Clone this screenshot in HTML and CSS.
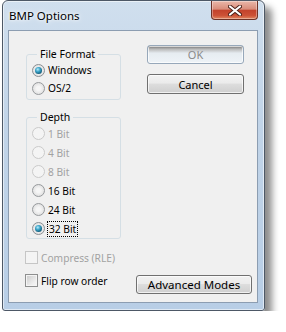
FILE: index.html
```html
<!DOCTYPE html>
<html lang="en">
<head>
  <meta charset="UTF-8" />
  <title>BMP Options</title>
  <link rel="stylesheet" href="styles.css">
</head>
<body>

  <!-- Dialog window -->
  <div class="window">
    <div class="titlebar">
      <span class="title">BMP Options</span>
      <button class="close" aria-label="Close">
        <svg width="14" height="11" viewBox="0 0 14 11">
          <path d="M2 1.5 L12 9.5 M12 1.5 L2 9.5" stroke="#4a2018" stroke-width="4" stroke-linecap="round"/>
          <path d="M2 1.5 L12 9.5 M12 1.5 L2 9.5" stroke="#fff" stroke-width="2.2" stroke-linecap="round"/>
        </svg>
      </button>
    </div>

    <div class="client">
      <div class="top">
        <div class="groups">
          <fieldset class="group format">
            <legend>File Format</legend>
            <label class="option"><span class="radio checked"></span>Windows</label>
            <label class="option"><span class="radio"></span>OS/2</label>
          </fieldset>

          <fieldset class="group depth">
            <legend>Depth</legend>
            <label class="option disabled"><span class="radio"></span>1 Bit</label>
            <label class="option disabled"><span class="radio"></span>4 Bit</label>
            <label class="option disabled"><span class="radio"></span>8 Bit</label>
            <label class="option"><span class="radio"></span>16 Bit</label>
            <label class="option"><span class="radio"></span>24 Bit</label>
            <label class="option"><span class="radio checked"></span><span class="focus">32 Bit</span></label>
          </fieldset>
        </div>

        <div class="actions">
          <button class="btn btn-default">OK</button>
          <button class="btn">Cancel</button>
        </div>
      </div>

      <div class="bottom">
        <div class="checks">
          <label class="option disabled"><span class="checkbox"></span>Compress (RLE)</label>
          <label class="option"><span class="checkbox"></span>Flip row order</label>
        </div>
        <button class="btn btn-wide">Advanced Modes</button>
      </div>
    </div>
  </div>

</body>
</html>
```

FILE: styles.css
```css
* {
  margin: 0;
  padding: 0;
  box-sizing: border-box;
  font-family: "Noto Sans", sans-serif;
}

body {
  background-color: #ffffff;
  padding-left: 2px;
}

/* window frame */
.window {
  width: 263px;
  display: flex;
  flex-direction: column;
  border: 1px solid #4d5866;
  border-radius: 6px 6px 3px 3px;
  background: linear-gradient(to bottom, #d0dfee 0, #c1d4e8 40%, #b8cee6 100%);
  box-shadow: inset 0 0 0 1px rgba(255, 255, 255, 0.55), 7px 7px 7px rgba(0, 0, 0, 0.45);
}

.titlebar {
  height: 29px;
  display: flex;
  align-items: center;
  padding-left: 6px;
}

.title {
  font-size: 11.5px;
  color: #000;
  text-shadow: 0 0 6px #fff, 0 0 3px #fff;
}

.close {
  align-self: flex-start;
  margin-left: auto;
  margin-right: 6px;
  width: 47px;
  height: 19px;
  border: 1px solid #6d3227;
  border-top: none;
  border-radius: 0 0 4px 4px;
  background: linear-gradient(to bottom, #eab7a9 0, #d98d7b 45%, #c3432c 52%, #cc5136 80%, #e08660 100%);
  box-shadow: inset 0 0 0 1px rgba(255, 255, 255, 0.35);
  display: flex;
  align-items: center;
  justify-content: center;
}

/* client area */
.client {
  margin: 0 6px 7px 5px;
  background-color: #f0f0f0;
  border: 1px solid #8c9db1;
  padding: 16px 0 8px 0;
  display: flex;
  flex-direction: column;
}

.top {
  display: flex;
  align-items: flex-start;
}

.groups {
  margin-left: 17px;
  display: flex;
  flex-direction: column;
  gap: 10px;
}

.group {
  width: 95px;
  border: 1px solid #d5dfe5;
  border-radius: 3px;
  padding: 0 4px 0 5px;
}

.group legend {
  font-size: 10.5px;
  line-height: 14px;
  margin-left: 5px;
  padding: 0 3px;
  color: #000;
}

.format {
  padding-bottom: 2px;
}

.option {
  display: flex;
  align-items: center;
  gap: 3px;
  height: 19px;
  font-size: 10.2px;
  color: #000;
}

.format .option {
  height: 18px;
}

.option.disabled {
  color: #a2a2a2;
}

.radio {
  flex: none;
  width: 13px;
  height: 13px;
  border-radius: 50%;
  border: 1px solid #979a9d;
  background: radial-gradient(circle at 50% 50%, #f6f6f6 25%, #d6d6d6 100%);
  display: flex;
  align-items: center;
  justify-content: center;
}

.radio.checked {
  border-color: #8b8f93;
}

.radio.checked::after {
  content: "";
  width: 7px;
  height: 7px;
  border-radius: 50%;
  background: radial-gradient(circle at 40% 35%, #b9ecfb 0, #3ea6ca 35%, #0f5a78 75%, #083c52 100%);
}

.disabled .radio {
  border-color: #cacaca;
  background: #f4f4f4;
}

.focus {
  outline: 1px dotted #000;
  padding: 0 1px;
  line-height: 14px;
}

/* buttons */
.actions {
  margin-left: 26px;
  margin-top: -2px;
  display: flex;
  flex-direction: column;
  gap: 10px;
}

.btn {
  width: 97px;
  height: 19px;
  font-size: 11px;
  color: #000;
  border: 1px solid #707070;
  border-radius: 3px;
  background: linear-gradient(to bottom, #f2f2f2 0, #ebebeb 45%, #dddddd 50%, #cfcfcf 100%);
  box-shadow: inset 0 0 0 1px rgba(255, 255, 255, 0.7);
}

.btn-default {
  color: #8a8a8a;
  border-color: #97a8ba;
  background: linear-gradient(to bottom, #6f6f6f 0, #b8b8b8 18%, #e6ecf1 42%, #eef3f7 100%);
}

.actions .btn:last-child {
  height: 20px;
}

/* bottom row */
.bottom {
  margin-top: 9px;
  display: flex;
  align-items: flex-end;
}

.checks {
  margin-left: 16px;
  margin-bottom: 4px;
  display: flex;
  flex-direction: column;
  gap: 4px;
}

.checkbox {
  flex: none;
  width: 13px;
  height: 13px;
  border: 1px solid #8e8f8f;
  background: linear-gradient(135deg, #c9c9c9 0, #efefef 70%, #f8f8f8 100%);
  box-shadow: inset 0 0 0 1px #f4f4f4;
}

.disabled .checkbox {
  border-color: #c6c6c6;
  background: #f4f4f4;
}

.btn-wide {
  width: 116px;
  margin-left: auto;
  margin-right: 5px;
  font-size: 11.5px;
}
```
